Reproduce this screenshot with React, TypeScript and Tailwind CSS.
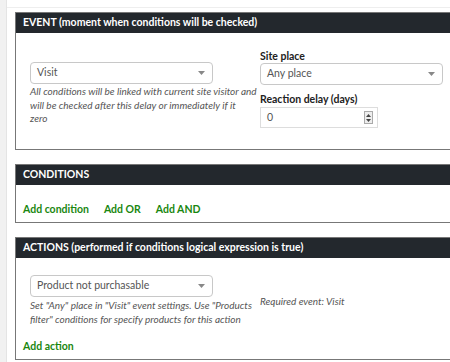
import React from "react";

function Caret() {
  return (
    <svg width="7" height="4" viewBox="0 0 7 4" className="shrink-0">
      <path d="M0 0h7L3.5 4z" fill="#888" />
    </svg>
  );
}

function Select({ value, className }: { value: string; className: string }) {
  return (
    <div
      className={`flex h-[22px] items-center justify-between rounded-[4px] border border-[#c8c8c8] bg-white pl-[6px] pr-[7px] text-[10.5px] text-[#555] ${className}`}
    >
      <span>{value}</span>
      <Caret />
    </div>
  );
}

function PanelHeader({ title }: { title: string }) {
  return (
    <div className="flex h-[20px] items-center bg-[#23282d] pl-[7px] text-[10.5px] font-bold text-white">
      {title}
    </div>
  );
}

function Hint({ children }: { children: React.ReactNode }) {
  return <p className="text-[10px] italic leading-[13.5px] text-[#555]">{children}</p>;
}

export default function App() {
  return (
    <div
      className="flex h-[362px] w-[450px] overflow-hidden bg-white"
      style={{ fontFamily: 'Lato, "Noto Sans", sans-serif' }}
    >
      <div className="w-[7px] shrink-0 border-r border-[#e4e4e4] bg-[#f1f1f1]" />
      <div className="flex-1 pt-[7px]">
        <div className="border-t border-[#eeeeee] pl-[8px] pt-[4px]">
          {/* Event */}
          <div className="w-[460px] border border-[#777]">
            <PanelHeader title="EVENT (moment when conditions will be checked)" />
            <div className="flex gap-[1px] pb-[21px] pl-[14px] pt-[16px]">
              <div className="w-[229px] pt-[13px]">
                <Select value="Visit" className="w-[183px]" />
                <div className="mt-[1px]">
                  <Hint>
                    All conditions will be linked with current site visitor and
                    will be checked after this delay or immediately if it
                    <br />
                    zero
                  </Hint>
                </div>
              </div>
              <div className="flex flex-col">
                <span className="text-[10.5px] font-bold leading-[14px] text-[#222]">Site place</span>
                <Select value="Any place" className="w-[183px]" />
                <span className="mt-[7px] text-[10.5px] font-bold leading-[14px] text-[#222]">
                  Reaction delay (days)
                </span>
                <div className="mt-[1px] flex h-[21px] w-[118px] items-center justify-between border border-[#ddd] pl-[6px] pr-[4px] text-[10.5px] text-[#555]">
                  <span>0</span>
                  <div className="flex h-[13px] w-[9px] flex-col items-center justify-center gap-[2px] border border-[#aaa] bg-[#eee]">
                    <svg width="5" height="3" viewBox="0 0 5 3">
                      <path d="M0 3h5L2.5 0z" fill="#444" />
                    </svg>
                    <svg width="5" height="3" viewBox="0 0 5 3">
                      <path d="M0 0h5L2.5 3z" fill="#444" />
                    </svg>
                  </div>
                </div>
              </div>
            </div>
          </div>

          {/* Conditions */}
          <div className="mt-[14px] w-[460px] border border-[#777]">
            <PanelHeader title="CONDITIONS" />
            <div className="flex gap-[15px] pb-[5px] pl-[7px] pt-[17px] text-[10.5px] font-bold leading-[15px] text-[#1a8710]">
              <span>Add condition</span>
              <span>Add OR</span>
              <span>Add AND</span>
            </div>
          </div>

          {/* Actions */}
          <div className="mt-[14px] w-[460px] border border-[#777]">
            <PanelHeader title="ACTIONS (performed if conditions logical expression is true)" />
            <div className="flex gap-[6px] pl-[14px] pt-[17px]">
              <div className="w-[224px]">
                <Select value="Product not purchasable" className="w-[183px]" />
                <div className="mt-[2px]">
                  <Hint>
                    Set "Any" place in "Visit" event settings. Use "Products
                    filter" conditions for specify products for this action
                  </Hint>
                </div>
              </div>
              <div className="pt-[20px]">
                <Hint>Required event: Visit</Hint>
              </div>
            </div>
            <div className="pb-[5px] pl-[7px] pt-[13px] text-[10.5px] font-bold leading-[15px] text-[#1a8710]">
              Add action
            </div>
          </div>
        </div>
      </div>
    </div>
  );
}
